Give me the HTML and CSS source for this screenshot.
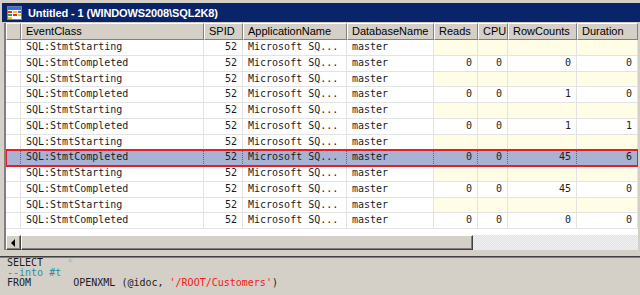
FILE: index.html
```html
<!DOCTYPE html>
<html lang="en">
<head>
    <meta charset="UTF-8">
    <meta name="viewport" content="width=device-width, initial-scale=1.0">
    <title>Untitled - 1 (WINDOWS2008\SQL2K8)</title>
    <link rel="stylesheet" href="styles.css">
</head>
<body>
    <div class="window">
        <div class="titlebar">
            <svg class="app-icon" width="15" height="14" viewBox="0 0 15 14">
                <rect x="0.5" y="0.5" width="14" height="13" fill="#fff" stroke="#6b7fa8"/>
                <rect x="1" y="1" width="13" height="3" fill="#3a6fd8"/>
                <rect x="1" y="5" width="4" height="2" fill="#e03030"/>
                <rect x="6" y="5" width="4" height="2" fill="#f0c020"/>
                <rect x="1" y="8" width="4" height="2" fill="#30a040"/>
                <rect x="6" y="8" width="4" height="2" fill="#e03030"/>
                <rect x="11" y="5" width="3" height="2" fill="#3a6fd8"/>
                <rect x="1" y="11" width="4" height="2" fill="#f0c020"/>
                <rect x="11" y="8" width="3" height="2" fill="#f0c020"/>
            </svg>
            <span class="title">Untitled - 1 (WINDOWS2008\SQL2K8)</span>
        </div>

        <div class="trace">
            <div class="grid">
                <div class="row head">
                    <div class="cell sel"></div>
                    <div class="cell">EventClass</div>
                    <div class="cell">SPID</div>
                    <div class="cell">ApplicationName</div>
                    <div class="cell">DatabaseName</div>
                    <div class="cell">Reads</div>
                    <div class="cell">CPU</div>
                    <div class="cell">RowCounts</div>
                    <div class="cell">Duration</div>
                </div>
                <div class="rows"></div>
            </div>
            <div class="hscroll">
                <div class="arrow"><span class="tri"></span></div>
                <div class="thumb"></div>
                <div class="track"></div>
            </div>
        </div>

        <div class="splitter"></div>

<pre class="sql">SELECT    <span class="dim">*</span>
<span class="comment">--into #t</span>
FROM       OPENXML (@idoc, <span class="str">'/ROOT/Customers'</span>)</pre>
    </div>

    <script>
        const events = [
            ['SQL:StmtStarting'],
            ['SQL:StmtCompleted', 0, 0, 0, 0],
            ['SQL:StmtStarting'],
            ['SQL:StmtCompleted', 0, 0, 1, 0],
            ['SQL:StmtStarting'],
            ['SQL:StmtCompleted', 0, 0, 1, 1],
            ['SQL:StmtStarting'],
            ['SQL:StmtCompleted', 0, 0, 45, 6],
            ['SQL:StmtStarting'],
            ['SQL:StmtCompleted', 0, 0, 45, 0],
            ['SQL:StmtStarting'],
            ['SQL:StmtCompleted', 0, 0, 0, 0]
        ];
        const selectedIndex = 7;
        const rows = document.querySelector('.rows');

        events.forEach((ev, i) => {
            const row = document.createElement('div');
            row.className = 'row';
            if (ev.length === 1) row.classList.add('starting');
            if (i === selectedIndex) row.classList.add('selected');

            const cells = [
                ['sel', ''],
                ['', ev[0]],
                ['num', '52'],
                ['', 'Microsoft SQ...'],
                ['', 'master']
            ];
            for (let k = 1; k <= 4; k++) {
                cells.push(['num stat', ev.length > 1 ? String(ev[k]) : '']);
            }

            cells.forEach(([cls, text]) => {
                const cell = document.createElement('div');
                cell.className = ('cell ' + cls).trim();
                cell.textContent = text;
                row.appendChild(cell);
            });
            rows.appendChild(row);
        });
    </script>
</body>
</html>
```

FILE: styles.css
```css
* {
    margin: 0;
    padding: 0;
    box-sizing: border-box;
}

body {
    background-color: #d4d0c8;
    width: 640px;
    height: 295px;
    overflow: hidden;
}

.window {
    width: 640px;
    height: 295px;
}

.titlebar {
    margin: 3px 0 0 2px;
    height: 19px;
    background-color: #0a246a;
    display: flex;
    align-items: center;
    padding-left: 5px;
}

.app-icon {
    flex-shrink: 0;
}

.title {
    margin-left: 6px;
    color: #fff;
    font-family: "Liberation Sans", Arial, sans-serif;
    font-weight: bold;
    font-size: 11px;
    letter-spacing: -0.1px;
}

.trace {
    margin: 1px 2px 0 4px;
    border-left: 2px solid #808080;
}

.grid {
    height: 212px;
    background-color: #fff;
    overflow: hidden;
}

.row {
    display: grid;
    grid-template-columns: 15px 183px 39px 104px 87px 44px 30px 69px 61px;
    height: 15.75px;
    font-family: "DejaVu Sans Mono", "Liberation Mono", monospace;
    font-size: 10px;
    color: #1c1c1c;
}

.row .cell {
    border-right: 1px solid #e3e3e3;
    border-bottom: 1px solid #e3e3e3;
    padding: 0 5px;
    line-height: 14.75px;
    white-space: nowrap;
    overflow: hidden;
}

.row .num {
    text-align: right;
}

.row.starting .stat {
    background-color: #fffde6;
}

.row.head {
    height: 17px;
    font-family: "Liberation Sans Narrow", "Liberation Sans", Arial, sans-serif;
    font-size: 11px;
    color: #000;
}

.row.head .cell {
    background-color: #d4d0c8;
    border-top: 1px solid #fff;
    border-left: 1px solid #fff;
    border-right: 1px solid #808080;
    border-bottom: 1px solid #808080;
    line-height: 15px;
    padding-left: 4px;
}

.row.selected {
    background-color: #a8b2d3;
    outline: 2px solid #e51f29;
    outline-offset: -1px;
    position: relative;
}

.row.selected .cell {
    border-right: 1px dotted #5a6080;
    border-bottom-color: #a8b2d3;
}

.row.selected .cell.sel {
    border-right-color: #5a6080;
}

.hscroll {
    display: flex;
    height: 15px;
}

.arrow,
.thumb {
    background-color: #d4d0c8;
    border-top: 1px solid #fff;
    border-left: 1px solid #fff;
    border-right: 1px solid #404040;
    border-bottom: 1px solid #404040;
    box-shadow: inset -1px -1px 0 #808080;
}

.arrow {
    width: 15px;
    display: flex;
    justify-content: center;
    align-items: center;
}

.tri {
    width: 0;
    height: 0;
    border-top: 4px solid transparent;
    border-bottom: 4px solid transparent;
    border-right: 4px solid #000;
    margin-left: -1px;
}

.thumb {
    width: 452px;
}

.track {
    flex: 1;
    background-color: #ebebeb;
    background-image: repeating-conic-gradient(#e2e2e2 0 25%, #f2f2f2 0 50%);
    background-size: 2px 2px;
}

.splitter {
    margin-top: 6px;
    height: 2px;
    background-color: #404040;
    border-bottom: 1px solid #808080;
}

.sql {
    padding: 0 0 0 7px;
    font-family: "DejaVu Sans Mono", "Liberation Mono", monospace;
    font-size: 10px;
    line-height: 10px;
    color: #1c1c1c;
}

.sql .dim {
    color: #b4b4b4;
}

.sql .comment {
    color: #2b8fa3;
}

.sql .str {
    color: #f01818;
}
```
